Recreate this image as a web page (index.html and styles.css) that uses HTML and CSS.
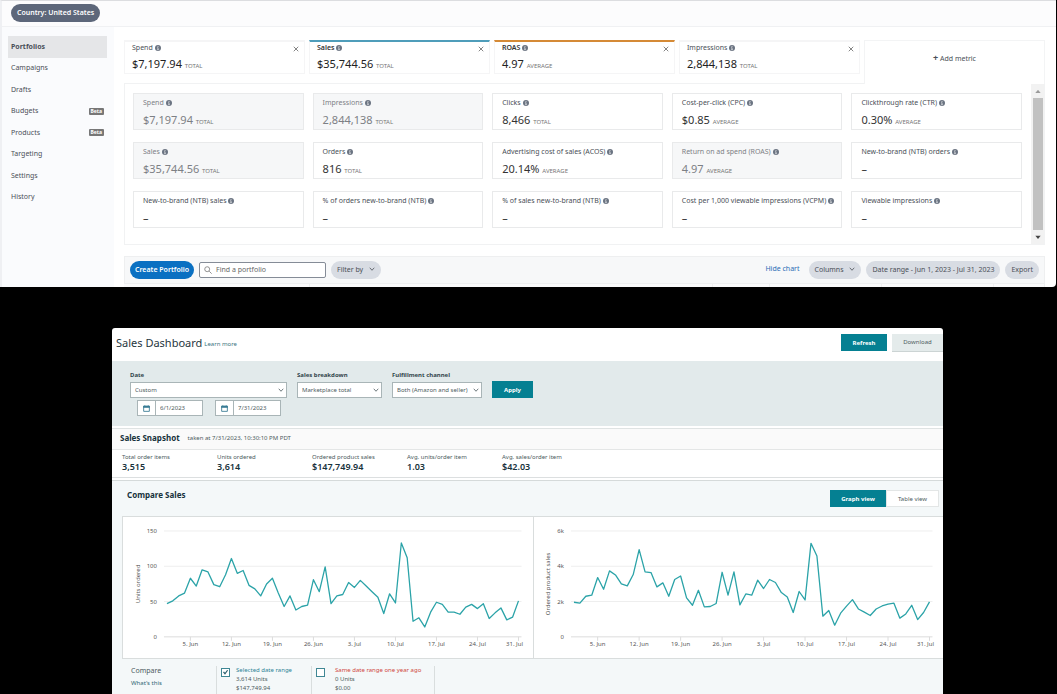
FILE: index.html
```html
<!DOCTYPE html>
<html lang="en">
  <head>
    <meta charset="UTF-8" />
    <meta name="viewport" content="width=device-width, initial-scale=1.0" />
    <title>Portfolios and Sales Dashboard</title>
    <link rel="stylesheet" href="styles.css">
  </head>
  <body>
    <svg class="sprite" aria-hidden="true">
      <symbol id="info" viewBox="0 0 12 12">
        <circle cx="6" cy="6" r="6" fill="#6b7482" />
        <path d="M6 2.2v1.8M4.8 5.3H6V9M4.6 9.3h2.8" stroke="#fff" stroke-width="1.4" fill="none" />
      </symbol>
      <symbol id="close" viewBox="0 0 12 12">
        <path d="M1.5 1.5l9 9M10.5 1.5l-9 9" stroke="#777" stroke-width="1.8" fill="none" />
      </symbol>
      <symbol id="chevron" viewBox="0 0 12 12">
        <path d="M1.5 3.5L6 8.5l4.5-5" stroke="currentColor" stroke-width="1.6" fill="none" />
      </symbol>
      <symbol id="calendar" viewBox="0 0 16 16">
        <path d="M1.5 3h13v11.5h-13z" fill="#fff" stroke="#3a7d95" stroke-width="2" />
        <path d="M1 2.5h14v3H1zM4 .5v3M12 .5v3" fill="#3a7d95" stroke="#3a7d95" stroke-width="1.5" />
      </symbol>
    </svg>

    <section class="ads">
      <header class="ads-header">
        <button class="country">Country: United States</button>
      </header>
      <div class="ads-body">
        <nav class="sidebar">
          <a href="#" class="active">Portfolios</a>
          <a href="#">Campaigns</a>
          <a href="#">Drafts</a>
          <a href="#">Budgets <span class="beta">Beta</span></a>
          <a href="#">Products <span class="beta">Beta</span></a>
          <a href="#">Targeting</a>
          <a href="#">Settings</a>
          <a href="#">History</a>
        </nav>

        <main class="ads-main">
          <div class="metrics">
            <div class="metric">
              <div class="label">Spend <svg class="info"><use href="#info" /></svg></div>
              <div class="value">$7,197.94 <small>TOTAL</small></div>
              <button class="close" aria-label="Remove Spend"><svg><use href="#close" /></svg></button>
            </div>
            <div class="metric blue">
              <div class="label">Sales <svg class="info"><use href="#info" /></svg></div>
              <div class="value">$35,744.56 <small>TOTAL</small></div>
              <button class="close" aria-label="Remove Sales"><svg><use href="#close" /></svg></button>
            </div>
            <div class="metric orange">
              <div class="label">ROAS <svg class="info"><use href="#info" /></svg></div>
              <div class="value">4.97 <small>AVERAGE</small></div>
              <button class="close" aria-label="Remove ROAS"><svg><use href="#close" /></svg></button>
            </div>
            <div class="metric">
              <div class="label">Impressions <svg class="info"><use href="#info" /></svg></div>
              <div class="value">2,844,138 <small>TOTAL</small></div>
              <button class="close" aria-label="Remove Impressions"><svg><use href="#close" /></svg></button>
            </div>
            <button class="add-metric"><b>+</b> Add metric</button>
          </div>

          <div class="picker">
            <div class="options">
              <div class="option used">
                <div class="label">Spend <svg class="info"><use href="#info" /></svg></div>
                <div class="value">$7,197.94 <small>TOTAL</small></div>
              </div>
              <div class="option used">
                <div class="label">Impressions <svg class="info"><use href="#info" /></svg></div>
                <div class="value">2,844,138 <small>TOTAL</small></div>
              </div>
              <div class="option">
                <div class="label">Clicks <svg class="info"><use href="#info" /></svg></div>
                <div class="value">8,466 <small>TOTAL</small></div>
              </div>
              <div class="option">
                <div class="label">Cost-per-click (CPC) <svg class="info"><use href="#info" /></svg></div>
                <div class="value">$0.85 <small>AVERAGE</small></div>
              </div>
              <div class="option">
                <div class="label">Clickthrough rate (CTR) <svg class="info"><use href="#info" /></svg></div>
                <div class="value">0.30% <small>AVERAGE</small></div>
              </div>
              <div class="option used">
                <div class="label">Sales <svg class="info"><use href="#info" /></svg></div>
                <div class="value">$35,744.56 <small>TOTAL</small></div>
              </div>
              <div class="option">
                <div class="label">Orders <svg class="info"><use href="#info" /></svg></div>
                <div class="value">816 <small>TOTAL</small></div>
              </div>
              <div class="option">
                <div class="label">Advertising cost of sales (ACOS) <svg class="info"><use href="#info" /></svg></div>
                <div class="value">20.14% <small>AVERAGE</small></div>
              </div>
              <div class="option used">
                <div class="label">Return on ad spend (ROAS) <svg class="info"><use href="#info" /></svg></div>
                <div class="value">4.97 <small>AVERAGE</small></div>
              </div>
              <div class="option">
                <div class="label">New-to-brand (NTB) orders <svg class="info"><use href="#info" /></svg></div>
                <div class="value">–</div>
              </div>
              <div class="option">
                <div class="label">New-to-brand (NTB) sales <svg class="info"><use href="#info" /></svg></div>
                <div class="value">–</div>
              </div>
              <div class="option">
                <div class="label">% of orders new-to-brand (NTB) <svg class="info"><use href="#info" /></svg></div>
                <div class="value">–</div>
              </div>
              <div class="option">
                <div class="label">% of sales new-to-brand (NTB) <svg class="info"><use href="#info" /></svg></div>
                <div class="value">–</div>
              </div>
              <div class="option">
                <div class="label">Cost per 1,000 viewable impressions (VCPM) <svg class="info"><use href="#info" /></svg></div>
                <div class="value">–</div>
              </div>
              <div class="option">
                <div class="label">Viewable impressions <svg class="info"><use href="#info" /></svg></div>
                <div class="value">–</div>
              </div>
            </div>
            <div class="scrollbar">
              <svg viewBox="0 0 12 12"><path d="M2 9h8L6 4z" fill="#9a9a9a" /></svg>
              <div class="thumb"></div>
              <svg viewBox="0 0 12 12"><path d="M2 4h8L6 9z" fill="#444" /></svg>
            </div>
          </div>

          <div class="toolbar">
            <button class="pill primary">Create Portfolio</button>
            <label class="search">
              <svg viewBox="0 0 12 12"><path d="M7.8 7.8L11.5 11.5M8.5 4.8a3.7 3.7 0 1 1-7.4 0a3.7 3.7 0 0 1 7.4 0z" stroke="#777" stroke-width="1.2" fill="none" /></svg>
              <input type="text" placeholder="Find a portfolio" aria-label="Find a portfolio" />
            </label>
            <button class="pill">Filter by <svg class="chevron"><use href="#chevron" /></svg></button>
            <a href="#" class="hide-chart">Hide chart</a>
            <button class="pill">Columns <svg class="chevron"><use href="#chevron" /></svg></button>
            <button class="pill">Date range - Jun 1, 2023 - Jul 31, 2023</button>
            <button class="pill">Export</button>
          </div>
          <div class="table-top"><i></i><i></i><i></i><i></i><i></i><i></i></div>
        </main>
      </div>
    </section>

    <section class="dashboard">
      <header class="dash-header">
        <h1>Sales Dashboard</h1>
        <a href="#">Learn more</a>
        <button class="btn teal refresh">Refresh</button>
        <button class="btn download">Download</button>
      </header>

      <form class="filters">
        <div class="field date">
          <label for="range">Date</label>
          <div class="select">
            <select id="range"><option>Custom</option></select>
            <svg class="chevron"><use href="#chevron" /></svg>
          </div>
          <div class="dates">
            <div class="date-box">
              <svg><use href="#calendar" /></svg>
              <input type="text" value="6/1/2023" aria-label="Start date" />
            </div>
            <div class="date-box">
              <svg><use href="#calendar" /></svg>
              <input type="text" value="7/31/2023" aria-label="End date" />
            </div>
          </div>
        </div>
        <div class="field breakdown">
          <label for="breakdown">Sales breakdown</label>
          <div class="select">
            <select id="breakdown"><option>Marketplace total</option></select>
            <svg class="chevron"><use href="#chevron" /></svg>
          </div>
        </div>
        <div class="field channel">
          <label for="channel">Fulfillment channel</label>
          <div class="select">
            <select id="channel"><option>Both (Amazon and seller)</option></select>
            <svg class="chevron"><use href="#chevron" /></svg>
          </div>
        </div>
        <button type="button" class="btn teal apply">Apply</button>
      </form>

      <div class="snapshot-head">
        <h2>Sales Snapshot</h2>
        <span>taken at 7/31/2023, 10:30:10 PM PDT</span>
      </div>
      <dl class="stats">
        <div><dt>Total order items</dt><dd>3,515</dd></div>
        <div><dt>Units ordered</dt><dd>3,614</dd></div>
        <div><dt>Ordered product sales</dt><dd>$147,749.94</dd></div>
        <div><dt>Avg. units/order item</dt><dd>1.03</dd></div>
        <div><dt>Avg. sales/order item</dt><dd>$42.03</dd></div>
      </dl>

      <div class="compare">
        <div class="compare-head">
          <h2>Compare Sales</h2>
          <button class="btn teal graph-view">Graph view</button>
          <button class="btn table-view">Table view</button>
        </div>
        <div class="charts">
          <svg id="units" viewBox="0 0 410 141" role="img" aria-label="Units ordered"></svg>
          <svg id="sales" viewBox="0 0 410 141" role="img" aria-label="Ordered product sales"></svg>
        </div>
        <div class="legend">
          <div class="legend-title">
            <div>Compare</div>
            <a href="#">What's this</a>
          </div>
          <label class="series">
            <input type="checkbox" checked />
            <span><em class="current">Selected date range</em>3,614 Units<br>$147,749.94</span>
          </label>
          <label class="series last-year">
            <input type="checkbox" />
            <span><em>Same date range one year ago</em>0 Units<br>$0.00</span>
          </label>
        </div>
      </div>
    </section>

    <script src="script.js"></script>
  </body>
</html>
```

FILE: styles.css
```css
* {
  box-sizing: border-box;
}

body {
  margin: 0;
  background: #000;
  font-family: "Noto Sans", "Open Sans", sans-serif;
  font-size: 7px;
  line-height: 10px;
  color: #4a4f57;
}

button,
input,
select {
  font: inherit;
  color: inherit;
  margin: 0;
  padding: 0;
  border: 0;
  outline: none;
}

a {
  color: inherit;
  text-decoration: none;
}

h1,
h2,
dl,
dd {
  margin: 0;
}

.sprite {
  display: none;
}

/* Ads console */

.ads {
  margin-right: 1px;
  height: 287px;
  background: #fff;
  border-top: 1px solid #dcdde0;
  border-left: 2px solid #eff0f3;
  border-radius: 0 0 4px 0;
  overflow: hidden;
}

.ads-header {
  height: 26px;
  padding: 3px 9px;
  background: #fcfcfd;
  border-bottom: 1px solid #f0f1f3;
}

.country {
  display: block;
  height: 18px;
  padding: 0 6px;
  border-radius: 9px;
  background: #5d677a;
  color: #fff;
  font-weight: 600;
}

.ads-body {
  display: flex;
}

.sidebar {
  display: grid;
  grid-template-rows: repeat(8, 1fr);
  align-content: start;
  width: 112px;
  height: 260px;
  padding: 9px 7px 79px 6px;
  background: #fafbfd;
}

.sidebar a {
  display: flex;
  align-items: center;
  justify-content: space-between;
  padding: 0 3px;
}

.sidebar .active {
  background: #e5e6e8;
  font-weight: 700;
}

.beta {
  padding: 0 2px;
  border-radius: 1px;
  background: #777;
  color: #fff;
  font-size: 5px;
  line-height: 7px;
  font-weight: 700;
}

.ads-main {
  flex: 1;
  padding: 13px 11px 0 10px;
}

.metrics {
  display: grid;
  grid-template-columns: repeat(5, 1fr);
  gap: 4px;
  height: 43px;
  position: relative;
  z-index: 1;
}

.metric {
  display: grid;
  grid-template-columns: 1fr auto;
  align-content: start;
  height: 34px;
  padding: 1px 4px 0 7px;
  border: 1px solid #f5f5f6;
  border-top-width: 2px;
}

.metric .value {
  grid-row: 2;
  color: #222;
}

.metric.blue {
  border-top-color: #4f9dba;
}

.metric.orange {
  border-top-color: #d58a36;
}

.blue .label,
.orange .label {
  font-weight: 600;
  color: #333;
}

.label,
.value {
  white-space: nowrap;
}

.label {
  line-height: 10px;
}

.info {
  width: 6px;
  height: 6px;
  vertical-align: -1px;
}

.value {
  font-size: 11px;
  line-height: 22px;
}

small {
  font-size: 6px;
  color: #777;
}

.close {
  width: 8px;
  height: 10px;
  background: none;
}

.close svg {
  display: block;
  width: 6px;
  height: 6px;
  margin: 2px auto 0;
}

.add-metric {
  height: 44px;
  padding-bottom: 9px;
  background: #fff;
  border: 1px solid #f3f4f5;
  border-bottom: 0;
}

.add-metric b {
  font-size: 9px;
}

.picker {
  display: flex;
  height: 162px;
  border: 1px solid #f1f2f3;
}

.options {
  flex: 1;
  display: grid;
  grid-template-columns: repeat(5, minmax(0, 1fr));
  grid-auto-rows: 37px;
  gap: 12px 9px;
  padding: 9px 9px 0 8px;
}

.option {
  padding: 4px 9px 0;
  border: 1px solid #e9eaeb;
}

.option .value {
  color: #333;
  line-height: 24px;
}

.option.used {
  background: #f6f7f8;
}

.used .label,
.option.used .value {
  color: #7d8085;
}

.scrollbar {
  display: flex;
  flex-direction: column;
  align-items: center;
  width: 13px;
  background: #f2f2f2;
}

.scrollbar svg {
  width: 8px;
  height: 8px;
  margin: 3px 0;
}

.thumb {
  flex: 1;
  width: 10px;
  background: #c1c1c1;
}

.toolbar {
  display: flex;
  align-items: center;
  gap: 5px;
  height: 28px;
  margin-top: 11px;
  padding: 0 5px;
  background: #f7f8f9;
  border: 1px solid #eeeff0;
}

.pill {
  height: 18px;
  padding: 0 6px;
  border-radius: 9px;
  background: #d8dce3;
  white-space: nowrap;
}

.chevron {
  width: 6px;
  height: 6px;
}

.pill .chevron {
  margin-left: 4px;
}

.pill.primary {
  padding: 0 5px;
  background: #0a70c2;
  color: #fff;
  font-weight: 600;
}

.search {
  display: flex;
  align-items: center;
  gap: 4px;
  width: 127px;
  height: 16px;
  padding: 0 4px;
  border: 1px solid #858c97;
  border-radius: 2px;
  background: #fff;
}

.search svg {
  width: 8px;
  height: 8px;
}

.search input {
  flex: 1;
  min-width: 0;
  background: none;
}

.search input::placeholder {
  color: #666;
}

.hide-chart {
  margin: 0 4px 3px auto;
  color: #2a6cb5;
}

.table-top {
  display: grid;
  grid-template-columns: 186fr 403fr 57fr 112fr 112fr 51fr;
  height: 4px;
  background: #fafafb;
}

.table-top i {
  border-right: 1px solid #eeeff0;
}

/* Sales dashboard */

.dashboard {
  margin: 41px 114px 0 112px;
  border-radius: 3px 3px 0 0;
  background: #fff;
  color: #4d5b60;
  overflow: hidden;
}

.dash-header {
  display: flex;
  align-items: center;
  height: 33px;
  padding: 0 0 4px 4px;
}

.dash-header h1 {
  font-size: 11px;
  line-height: 16px;
  font-weight: 400;
  color: #1f3640;
}

.dash-header a {
  margin: 3px auto 0 2px;
  font-size: 6px;
  color: #3b7480;
}

.btn {
  height: 17px;
  font-size: 6px;
  background: #fff;
}

.btn.teal {
  background: #058092;
  color: #fff;
  font-weight: 700;
}

.refresh {
  width: 46px;
  margin-right: 5px;
}

.btn.download {
  width: 51px;
  height: 18px;
  background: #e4ebeb;
  border-bottom: 1px solid #ccd4d4;
}

.filters {
  display: flex;
  align-items: flex-start;
  height: 65px;
  padding: 9px 18px 0;
  background: #e2eaeb;
  font-size: 6px;
}

.field {
  display: flex;
  flex-direction: column;
  margin-right: 10px;
}

.field label {
  margin-bottom: 2px;
  font-weight: 700;
  color: #31454c;
}

.date {
  width: 157px;
}

.breakdown {
  width: 85px;
}

.channel {
  width: 90px;
}

.select {
  display: grid;
}

.select select,
.select .chevron {
  grid-area: 1 / 1;
}

.select select {
  height: 16px;
  padding: 0 4px;
  border: 1px solid #a9b5b7;
  background: #fff;
  appearance: none;
}

.select .chevron {
  place-self: center end;
  margin-right: 3px;
  pointer-events: none;
}

.dates {
  display: flex;
  gap: 12px;
  margin: 2px 6px 0 7px;
}

.date-box {
  display: flex;
  align-items: center;
  flex: 1;
  min-width: 0;
  height: 16px;
  border: 1px solid #a9b5b7;
  background: #fff;
}

.date-box svg {
  flex: none;
  width: 7px;
  height: 7px;
  margin: 0 5px;
}

.date-box input {
  flex: 1;
  min-width: 0;
  height: 14px;
  padding-left: 4px;
  border-left: 1px solid #a9b5b7;
  background: none;
}

.apply {
  width: 41px;
  margin-top: 11px;
}

.dashboard h2 {
  font-size: 8px;
  font-weight: 700;
  color: #17323c;
}

.snapshot-head {
  display: flex;
  align-items: center;
  gap: 8px;
  height: 22px;
  margin-top: 2px;
  padding: 0 8px 2px;
  background: #fafafa;
  border-top: 1px solid #dfe3e3;
  border-bottom: 1px solid #e4e6e6;
  font-size: 6px;
}

.stats {
  display: flex;
  height: 28px;
  padding: 3px 10px 0;
  border-bottom: 1px solid #dcdfe0;
  font-size: 6px;
}

.stats div {
  width: 95px;
  white-space: nowrap;
}

.stats dt {
  line-height: 9px;
}

.stats dd {
  font-size: 9px;
  line-height: 9px;
  font-weight: 600;
  color: #17323c;
}

.compare {
  margin-top: 2px;
  border-top: 1px solid #d5dada;
  background: #f4f8f9;
}

.compare-head {
  display: flex;
  align-items: center;
  height: 35px;
  padding: 0 4px 0 15px;
}

.compare-head h2 {
  margin: 0 auto 8px 0;
}

.graph-view {
  width: 56px;
}

.table-view {
  width: 53px;
  border: 1px solid #e3e6e6;
}

.charts {
  display: flex;
  margin-left: 10px;
  background: #fff;
  border: 1px solid #d9dddd;
  border-right: 0;
}

.charts svg {
  display: block;
  flex: 1;
  min-width: 0;
}

.charts svg + svg {
  border-left: 1px solid #d9dddd;
}

.grid {
  stroke: #eee;
}

.axis {
  stroke: #dcdcdc;
}

.line {
  fill: none;
  stroke: #2ba3a8;
  stroke-width: 1.3;
  stroke-linejoin: round;
}

.charts text {
  font-size: 6px;
  fill: #555;
}

.legend {
  display: flex;
  height: 35px;
  padding: 7px 19px 0;
}

.legend-title {
  width: 85px;
  line-height: 10px;
}

.legend-title a {
  font-size: 6px;
  line-height: 14px;
  color: #2f6674;
}

.series {
  display: flex;
  gap: 6px;
  width: 95px;
  padding-left: 4px;
  border-left: 1px solid #d9dede;
  font-size: 6px;
  line-height: 9px;
  white-space: nowrap;
}

.series em {
  display: block;
  font-style: normal;
  color: #d0473e;
}

.series .current {
  color: #2c8397;
}

.series.last-year {
  gap: 10px;
  width: 124px;
  border-right: 1px solid #d9dede;
}

.series input {
  display: grid;
  place-content: center;
  width: 9px;
  height: 9px;
  margin-top: 2px;
  border: 1px solid #3f8794;
  background: #fff;
  appearance: none;
}

.series input:checked::before {
  content: "";
  width: 5px;
  height: 5px;
  background: #2b5f6d;
  clip-path: polygon(0 50%, 20% 35%, 40% 60%, 85% 0, 100% 15%, 40% 100%);
}
```

FILE: script.js
```js
// daily values, Jun 1 - Jul 31
const units = [
  47, 51, 58, 62, 83, 72, 95, 92, 74, 71, 88, 111, 90, 94, 73, 68, 58, 75, 83, 62,
  43, 58, 38, 43, 45, 81, 64, 99, 47, 58, 60, 77, 70, 80, 72, 64, 56, 33, 61, 48,
  133, 112, 22, 27, 14, 35, 49, 46, 35, 35, 32, 42, 46, 40, 47, 26, 34, 41, 24, 28, 51,
];
const sales = [
  1960, 1910, 2300, 2360, 3360, 2700, 3740, 3510, 3000, 2890, 3530, 4940, 3680, 3640,
  2830, 3060, 2300, 3250, 3450, 2210, 1790, 2640, 1700, 1720, 1890, 3660, 2360, 3680,
  1810, 2430, 2360, 3210, 2740, 3250, 3080, 2510, 2260, 1380, 2570, 2090, 5300, 4580,
  1170, 1490, 660, 1340, 1740, 2110, 1580, 1400, 1210, 1580, 1750, 1850, 1910, 1060,
  1300, 1790, 980, 1380, 1980,
];

const dates = {
  4: "5. Jun", 11: "12. Jun", 18: "19. Jun", 25: "26. Jun",
  32: "3. Jul", 39: "10. Jul", 46: "17. Jul", 53: "24. Jul", 60: "31. Jul",
};

const TOP = 14;
const BOTTOM = 120;

function drawChart(id, data, opts) {
  const { left, right, max, labels, title, titleX } = opts;
  const x = (i) => left + (i * (right - left)) / (data.length - 1);
  const y = (v) => BOTTOM - (v / max) * (BOTTOM - TOP);
  let out = "";

  labels.forEach((text, i) => {
    const ly = y((max * i) / (labels.length - 1));
    out += `<path class="${i ? "grid" : "axis"}" d="M${left - 3} ${ly}H${right + 3}" />`;
    out += `<text x="${left - 10}" y="${ly + 2}" text-anchor="end">${text}</text>`;
  });

  Object.entries(dates).forEach(([i, text]) => {
    out += `<path class="axis" d="M${x(i)} ${BOTTOM}v4" />`;
    const lx = Math.min(x(i), right - 4);
    out += `<text x="${lx}" y="${BOTTOM + 9}" text-anchor="middle">${text}</text>`;
  });

  out += `<text transform="translate(${titleX} 67) rotate(-90)" text-anchor="middle">${title}</text>`;
  out += `<polyline class="line" points="${data.map((v, i) => `${x(i)},${y(v)}`).join(" ")}" />`;
  document.getElementById(id).innerHTML = out;
}

drawChart("units", units, {
  left: 44, right: 396, max: 150, labels: ["0", "50", "100", "150"],
  title: "Units ordered", titleX: 17,
});
drawChart("sales", sales, {
  left: 40, right: 396, max: 6000, labels: ["0", "2k", "4k", "6k"],
  title: "Ordered product sales", titleX: 16,
});
```
